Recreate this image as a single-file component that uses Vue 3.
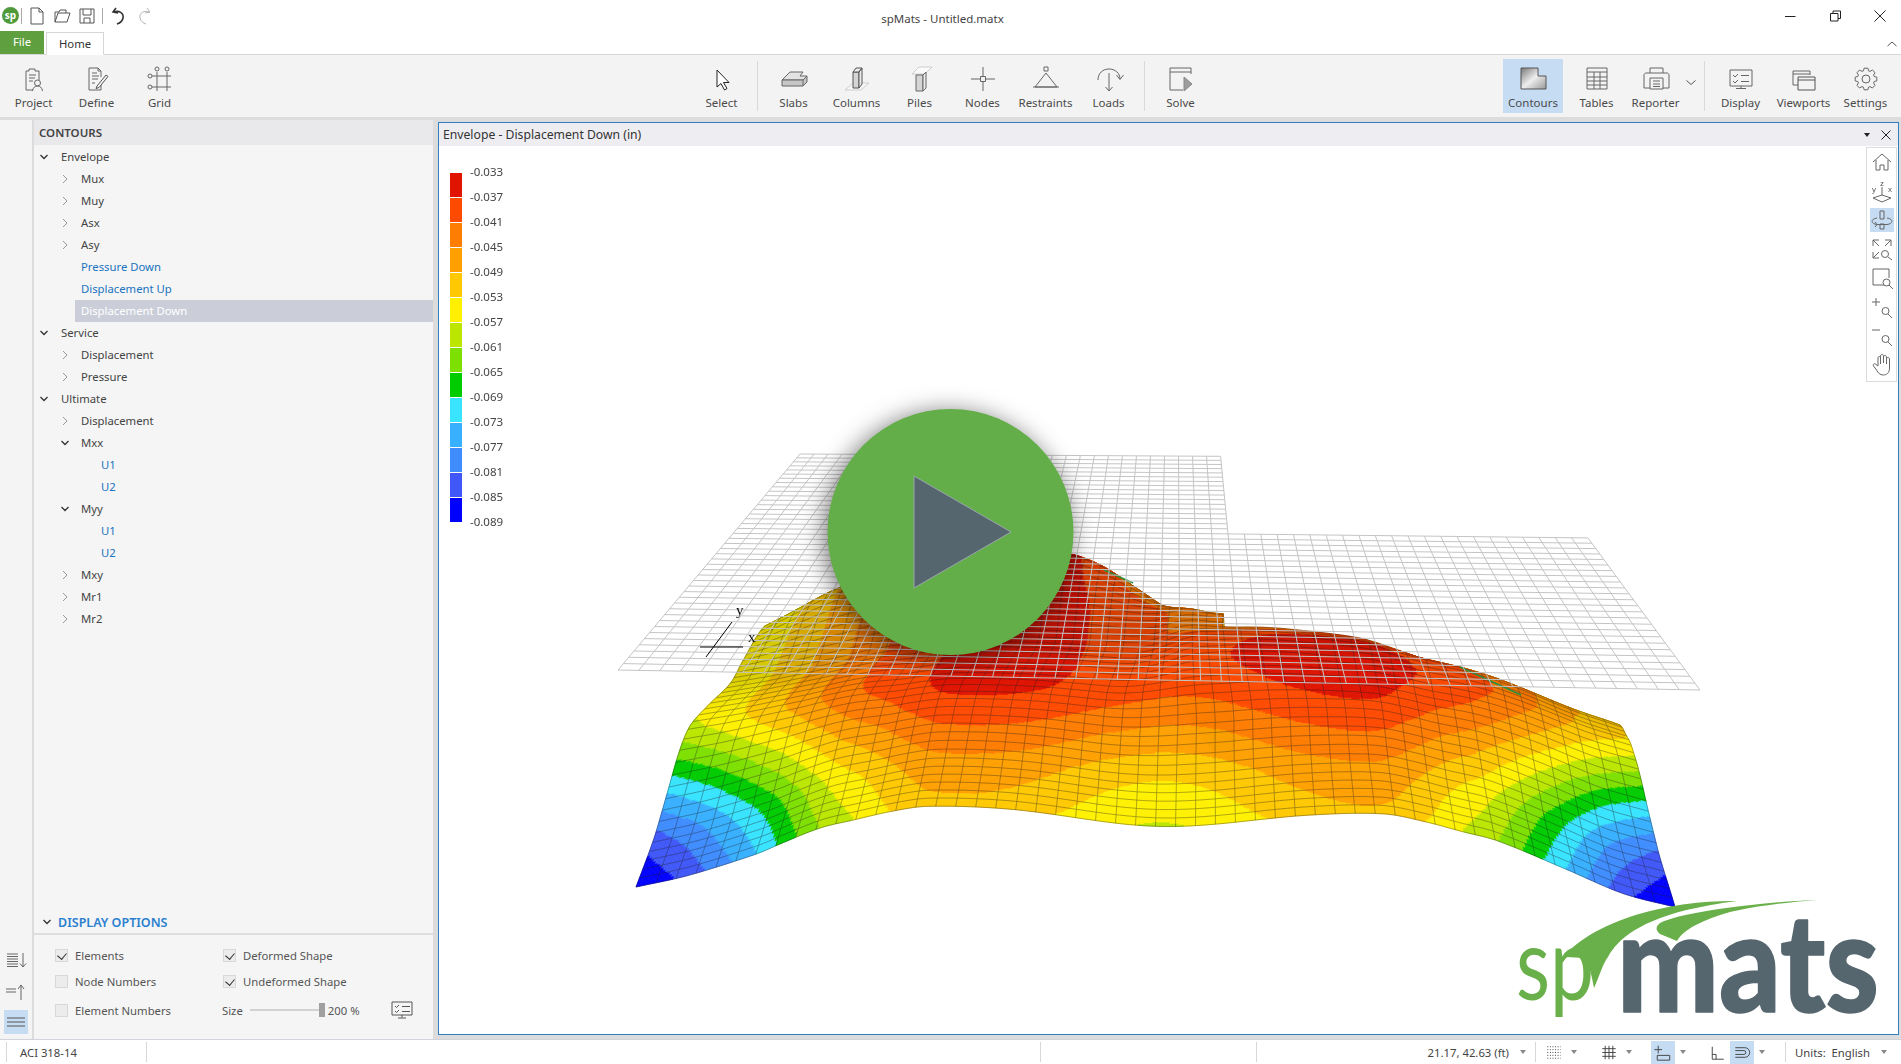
<template>
  <div class="app">
    <header class="titlebar">
      <div class="qat">
        <span class="splogo">sp</span>
        <i class="qsep"></i>
        <svg v-for="q in qatFile" :key="q.name" class="qico" viewBox="0 0 20 20">
          <path v-for="(d, i) in q.paths" :key="i" :d="d" :class="q.cls" />
        </svg>
        <i class="qsep two"></i>
        <svg v-for="q in qatEdit" :key="q.name" class="qico" viewBox="0 0 20 20">
          <path v-for="(d, i) in q.paths" :key="i" :d="d" :class="q.cls" />
        </svg>
      </div>
      <div class="doc-title">spMats - Untitled.matx</div>
      <div class="winctl">
        <svg viewBox="0 0 14 14" class="wbtn"><path d="M2 7.5h10.5" /></svg>
        <svg viewBox="0 0 14 14" class="wbtn"><path d="M2.5 4.5h7.5v7.5h-7.5z M5 4.5v-2.5h7.5v7.5h-2.5" /></svg>
        <svg viewBox="0 0 14 14" class="wbtn"><path d="M1.5 1.5l11 11 M12.5 1.5l-11 11" /></svg>
      </div>
    </header>

    <nav class="tabs">
      <div class="tab-file">File</div>
      <div class="tab-home">Home</div>
      <svg class="collapse" viewBox="0 0 12 8"><path d="M1.5 6l4.5-4 4.5 4" /></svg>
    </nav>

    <section class="ribbon">
      <div class="rgroup first">
        <RibbonBtn v-for="b in groupA" :key="b.label" :btn="b" />
      </div>
      <div class="rgroup mid">
        <RibbonBtn :btn="groupB[0]" />
        <i class="rsep"></i>
        <RibbonBtn v-for="b in groupB.slice(1, 7)" :key="b.label" :btn="b" />
        <i class="rsep"></i>
        <RibbonBtn :btn="groupB[7]" />
      </div>
      <div class="rgroup right">
        <RibbonBtn :btn="groupC[0]" class="active narrow" />
        <RibbonBtn :btn="groupC[1]" class="tables" />
        <RibbonBtn :btn="groupC[2]" class="reporter" />
        <svg class="rep-arrow" viewBox="0 0 12 8"><path d="M1.5 1.5l4.5 4 4.5-4" /></svg>
        <i class="rsep"></i>
        <RibbonBtn v-for="b in groupC.slice(3)" :key="b.label" :btn="b" class="tail" />
      </div>
    </section>

    <main class="workspace">
      <aside class="rail">
        <svg class="railico" viewBox="0 0 24 24"><path d="M3 6h11 M3 8.5h11 M3 11h11 M3 13.5h11 M3 16h11 M3 18.5h11 M19 5v14 M16 15.5l3 3.5 3-3.5" /></svg>
        <svg class="railico" viewBox="0 0 24 24"><path d="M2 10h10 M2 13h10 M17 21V6 M14 10l3-4 3 4" /></svg>
        <svg class="railico on" viewBox="0 0 24 24"><path d="M3 8h18 M3 12h18 M3 16h18" /></svg>
      </aside>

      <aside class="panel">
        <div class="panel-head">CONTOURS</div>
        <ul class="tree">
          <li v-for="(n, i) in tree" :key="i" class="row" :class="['lv' + n.lv, { leaf: n.leaf, sel: n.sel }]">
            <svg v-if="n.open !== undefined" class="caret" :class="{ open: n.open }" viewBox="0 0 10 10">
              <path :d="n.open ? 'M1.5 3l3.5 3.5 3.5-3.5' : 'M3 1l4 4-4 4'" />
            </svg>
            <span class="row-text">{{ n.t }}</span>
          </li>
        </ul>
        <div class="opt-head">
          <svg class="opt-caret" viewBox="0 0 10 10"><path d="M1.5 3l3.5 3.5 3.5-3.5" /></svg>
          <span>DISPLAY OPTIONS</span>
        </div>
        <div class="opt-body">
          <label class="opt"><i class="cb on"></i>Elements</label>
          <label class="opt"><i class="cb on"></i>Deformed Shape</label>
          <label class="opt"><i class="cb"></i>Node Numbers</label>
          <label class="opt"><i class="cb on"></i>Undeformed Shape</label>
          <label class="opt"><i class="cb"></i>Element Numbers</label>
          <div class="opt size">
            <span>Size</span>
            <span class="slider"><i class="thumb"></i></span>
            <span>200 %</span>
            <svg class="size-ico" viewBox="0 0 24 20">
              <path d="M2 2h20v13H2z M5 6l1.500 1.500 2.500-2.500 M5 11l1.500 1.500 2.500-2.500 M12 6.500h8 M12 11.500h8 M12 15v2.500 M8 18h8" />
            </svg>
          </div>
        </div>
      </aside>

      <section class="viewport">
        <div class="vp-head">
          <span>Envelope - Displacement Down (in)</span>
          <span class="vp-ctl">
            <i class="tri"></i>
            <svg viewBox="0 0 12 12"><path d="M1.500 1.500l9 9 M10.500 1.500l-9 9" /></svg>
          </span>
        </div>
        <div class="vp-body">
          <canvas ref="cv" class="plot" width="1459" height="888"></canvas>

          <div class="legend">
            <div class="swatches">
              <i v-for="c in legendColors" :key="c" :style="{ background: c }"></i>
            </div>
            <div class="ticks">
              <span v-for="l in legendLabels" :key="l">{{ l }}</span>
            </div>
          </div>

          <svg class="overlay" viewBox="439 146 1459 888">
            <path d="M700 647H743 M732 622L706 657" stroke="#000" fill="none" />
            <text x="736" y="615" class="axis">y</text>
            <text x="748" y="642" class="axis">x</text>

            <circle class="play" cx="950.500" cy="532" r="123" />
            <path d="M914 476L1011 532L914 588Z" fill="#56666f" stroke="#9aa7ad" stroke-width="1" />

            <path d="M1737 901C1680 900 1610 915 1572 948L1566 957L1584 958C1590 965 1592 978 1594 988C1600 975 1602 965 1608 957C1620 935 1650 912 1737 901Z" fill="#6ab04a" />
            <path d="M1818 900C1760 902 1680 912 1660 923C1655 927 1656 931 1660 934L1677 941C1682 932 1695 922 1730 912C1755 906 1790 902 1818 900Z" fill="#6ab04a" />
            <text x="1516" y="1000" class="logo-sp" textLength="78" lengthAdjust="spacingAndGlyphs">sp</text>
            <text x="1617" y="1012" class="logo-mats" textLength="262" lengthAdjust="spacingAndGlyphs">mats</text>
          </svg>

          <div class="navbar">
            <div v-for="(n, i) in navIcons" :key="i" class="nav-item" :class="{ on: i === 2 }">
              <svg viewBox="0 0 24 24">
                <path v-for="(d, k) in n" :key="k" :d="d" />
                <template v-if="i === 1">
                  <text x="10" y="7" class="nav-letter">z</text>
                  <text x="2" y="13" class="nav-letter">y</text>
                  <text x="18" y="13" class="nav-letter">x</text>
                </template>
              </svg>
            </div>
          </div>
        </div>
      </section>
    </main>

    <footer class="status">
      <div class="st st-a">ACI 318-14</div>
      <div class="st st-b"></div>
      <div class="st st-c"></div>
      <div class="st st-d">21.17, 42.63 (ft)<i class="tri grey"></i></div>
      <div class="st st-e">
        <svg class="sico" viewBox="0 0 24 24"><path d="M5 6h14 M5 9h14 M5 12h14 M5 15h14 M5 18h14" stroke-dasharray="1 1.700" /></svg>
        <i class="tri grey"></i>
        <svg class="sico" viewBox="0 0 24 24"><path d="M5 8h14 M5 12h14 M5 16h14 M8 5v14 M12 5v14 M16 5v14" /></svg>
        <i class="tri grey"></i>
        <svg class="sico on" viewBox="0 0 24 24"><path d="M7 5v8 M3 9h8 M6 15h13v5H6z" /></svg>
        <i class="tri grey"></i>
        <svg class="sico" viewBox="0 0 24 24"><path d="M6 6v13h12 M6 14h4v5" /></svg>
        <svg class="sico on tight" viewBox="0 0 24 24"><path d="M5 7h10a5 5 0 0 1 0 10H5 M5 10h9a2 2 0 0 1 0 4H5" /></svg>
        <i class="tri grey"></i>
      </div>
      <div class="st st-f">Units:&nbsp;&nbsp;English<i class="tri grey"></i></div>
    </footer>
  </div>
</template>

<script setup>
import { ref, onMounted, h as el } from 'vue';

// ribbon button, small enough to stay in this file
const RibbonBtn = {
  props: ['btn'],
  setup(props) {
    return () => el('div', { class: 'rbtn' }, [
      el('svg', { viewBox: '0 0 32 32', class: 'rico' }, [
        props.btn.grad ? el('defs', [
          el('linearGradient', { id: 'cg', x1: 0, y1: 0, x2: 1, y2: 1 }, [
            el('stop', { offset: '0', 'stop-color': '#777' }),
            el('stop', { offset: '.5', 'stop-color': '#eee' }),
            el('stop', { offset: '1', 'stop-color': '#999' }),
          ]),
        ]) : null,
        ...props.btn.p.map((x, i) => el('path', {
          key: i,
          d: x.d || x,
          fill: x.f || 'none',
          stroke: x.s || '#666',
          'stroke-width': 1,
        })),
      ]),
      el('span', { class: 'rlabel' }, props.btn.label),
    ]);
  },
};

const gearPath = () => {
  const cx = 16, cy = 16, teeth = 8;
  let d = '';
  for (let i = 0; i < teeth; i++) {
    const a = (i / teeth) * Math.PI * 2;
    const pts = [[8.6, -0.3], [11, -0.17], [11, 0.17], [8.6, 0.3]];
    pts.forEach(([r, o]) => {
      const x = cx + r * Math.cos(a + o), y = cy + r * Math.sin(a + o);
      d += (d ? 'L' : 'M') + x.toFixed(1) + ' ' + y.toFixed(1);
    });
  }
  return d + 'Z M20 16a4 4 0 1 1-8 0a4 4 0 1 1 8 0';
};

const groupA = [
  { label: 'Project', p: ['M8 8h3V6h6v2h4v9 M8 8v19h7 M11 12h7 M11 15h6 M11 18h4 M22.500 20a3 3 0 1 1-6 0a3 3 0 1 1 6 0 M14.500 28c.5-3.500 2.500-5 5-5s4.500 1.500 5 5'] },
  { label: 'Define', p: ['M8 5h9l3 3v6 M17 5v3h3 M8 5v22h12v-6 M11 10h5 M11 13h7 M11 16h6 M11 20h3', { d: 'M16 23l9-11 2 1.500-9 11-3 1z', s: '#555', f: '#f3f3f3' }] },
  { label: 'Grid', p: ['M13 9v19 M23 9v19 M8 13h19 M8 24h19 M15 6a2 2 0 1 1-4 0a2 2 0 1 1 4 0 M25 6a2 2 0 1 1-4 0a2 2 0 1 1 4 0 M8 13a2 2 0 1 1-4 0a2 2 0 1 1 4 0 M8 24a2 2 0 1 1-4 0a2 2 0 1 1 4 0'] },
];
const groupB = [
  { label: 'Select', p: [{ d: 'M11 7v17l4-3.500 3.500 6.500 2.500-1.500-3.500-6h5.500z', f: '#fff', s: '#222' }] },
  { label: 'Slabs', p: [{ d: 'M4 17l8-8h13l-3 4h7l-4 4z', f: '#e2e2e2' }, { d: 'M4 17v6h21l4-4v-6l-4 4z M25 17v6', f: '#c6c6c6' }] },
  { label: 'Columns', p: [{ d: 'M4 27l8-7h16l-8 7z', f: '#f6f6f6', s: '#cfcfcf' }, { d: 'M12 9h6v16h-6z', f: '#d5d5d5', s: '#555' }, { d: 'M12 9l3-4h6l-3 4z M18 9l3-4v16l-3 4z', f: '#ececec', s: '#555' }] },
  { label: 'Piles', p: [{ d: 'M8 11l7-7h13l-7 7z', f: '#fafafa', s: '#ccc' }, { d: 'M12 12h7v16h-7z', f: '#d5d5d5', s: '#666' }, { d: 'M19 12l3-3v16l-3 3z', f: '#ececec', s: '#666' }] },
  { label: 'Nodes', p: ['M16 4v9 M16 19v9 M4 16h9 M19 16h9', { d: 'M13.500 13.500h5v5h-5z', s: '#666' }] },
  { label: 'Restraints', p: ['M16 10l11 14H5z M3 24h26', 'M14 4h4v4h-4z'] },
  { label: 'Loads', p: ['M16 10v18 M12.500 24l3.500 4 3.500-4 M5 17c0-7 5-11 11-11 6 0 11 4 11 10 M23.500 12l3.500 4.500 3.500-4.500'] },
  { label: 'Solve', p: ['M5 5h21v6 M5 5v22h13 M5 9h21', { d: 'M19 14l8 7-8 7z', f: '#9c9c9c', s: '#888' }] },
];
const groupC = [
  { label: 'Contours', grad: true, p: [{ d: 'M4 5h17v8h8v13H4z', f: 'url(#cg)', s: '#555' }] },
  { label: 'Tables', p: ['M6 5h20v21H6z M6 9h20 M6 14h20 M6 18h20 M6 22h20 M13 9v17 M19 9v17'] },
  { label: 'Reporter', p: ['M10 10V5h13v5 M10 25H4V12c0-1 1-2 2-2h21c1 0 2 1 2 2v13h-6', { d: 'M10 15h13v11H10z', f: '#f3f3f3' }, 'M13 18h7 M13 21h7 M13 23.500h7'] },
  { label: 'Display', p: ['M5 7h22v16H5z M8 12l2 2 3-3 M8 18l2 2 3-3 M16 12.500h8 M16 18.500h8 M16 23v2 M11 25.500h10'] },
  { label: 'Viewports', p: ['M5 8h17v4 M5 8v14h5 M5 11h17', { d: 'M10 14h17v13H10z M10 17h17', f: '#f3f3f3', s: '#555' }] },
  { label: 'Settings', p: [gearPath()] },
];

const qatFile = [
  { name: 'new', cls: 'q', paths: ['M4 2h8l4 4v12H4z M12 2v4h4'] },
  { name: 'open', cls: 'q', paths: ['M3 16V6h4l1-2h6v3 M3 16l3-9h12l-3 9z'] },
  { name: 'save', cls: 'q', paths: ['M3 3h14v14H3z M6 3v6h8V3 M7 17v-5h6v5'] },
];
const qatEdit = [
  { name: 'undo', cls: 'q dark', paths: ['M7 2L4 6l5 1 M4.500 6C10 4 15 7 14 12c-.5 3-3 5-6 6'] },
  { name: 'redo', cls: 'q light', paths: ['M13 2l3 4-5 1 M15.500 6C10 4 5 7 6 12c.5 3 3 5 6 6'] },
];

const tree = [
  { t: 'Envelope', lv: 0, open: true },
  { t: 'Mux', lv: 1, open: false },
  { t: 'Muy', lv: 1, open: false },
  { t: 'Asx', lv: 1, open: false },
  { t: 'Asy', lv: 1, open: false },
  { t: 'Pressure Down', lv: 1, leaf: true },
  { t: 'Displacement Up', lv: 1, leaf: true },
  { t: 'Displacement Down', lv: 1, leaf: true, sel: true },
  { t: 'Service', lv: 0, open: true },
  { t: 'Displacement', lv: 1, open: false },
  { t: 'Pressure', lv: 1, open: false },
  { t: 'Ultimate', lv: 0, open: true },
  { t: 'Displacement', lv: 1, open: false },
  { t: 'Mxx', lv: 1, open: true },
  { t: 'U1', lv: 2, leaf: true },
  { t: 'U2', lv: 2, leaf: true },
  { t: 'Myy', lv: 1, open: true },
  { t: 'U1', lv: 2, leaf: true },
  { t: 'U2', lv: 2, leaf: true },
  { t: 'Mxy', lv: 1, open: false },
  { t: 'Mr1', lv: 1, open: false },
  { t: 'Mr2', lv: 1, open: false },
];

const navIcons = [
  ['M3 12L12 4l9 8 M6 10v10h4v-5h4v5h4V10'],
  ['M12 8v8 M12 16L3 19 M12 16l9 3 M3 19l9 4 9-4'],
  ['M10 3h4v8h-4z M10 16h4v5h-4z M7 10c-7 1-6 6 0 6.500h10c6-.5 7-5.500 0-6.500 M5 19l2-2.500-2-2.500'],
  ['M3 9V3h6 M3 3l6 6 M21 9V3h-6 M21 3l-6 6 M3 15v6h6 M3 21l6-6 M18.500 17a3.500 3.500 0 1 1-7 0a3.500 3.500 0 1 1 7 0 M18 20l4 3'],
  ['M14 19H3V3h16v9 M20 16.500a3.500 3.500 0 1 1-7 0a3.500 3.500 0 1 1 7 0 M19 19l4 4'],
  ['M6 3v8 M2 7h8 M19 16a3.500 3.500 0 1 1-7 0a3.500 3.500 0 1 1 7 0 M18 19l4 4'],
  ['M2 6h8 M19 15a3.500 3.500 0 1 1-7 0a3.500 3.500 0 1 1 7 0 M18 18l4 4'],
  ['M8 13V5c0-2 2.500-2 2.500 0v6 M10.500 10V3c0-2 3-2 3 0v7 M13.500 10V4c0-2 3-2 3 0v7 M16.500 11V6c0-2 3-2 3 0v9c0 5-3 7-6 7-4 0-5-2-7-5l-3-4c-1-2 1-3 2.500-1.500L8 13'],
];

// top of the scale first, as in the legend
const legendColors = ['#e01400', '#ff4b00', '#ff7d00', '#ffa000', '#ffc800', '#fff000', '#bce600', '#7ee000', '#00cc00', '#38e4ff', '#38b0ff', '#3f8cff', '#4058f8', '#0000ff'];
const legendLabels = Array.from({ length: 15 }, (_, i) => '-' + (0.033 + i * 0.004).toFixed(3));

// --- mesh of the deformed slab ---
const curve = (pts) => {
  const n = pts.length;
  const m = pts.map((p, i) => {
    if (i === 0) return (pts[1][1] - p[1]) / (pts[1][0] - p[0]);
    if (i === n - 1) return (p[1] - pts[i - 1][1]) / (p[0] - pts[i - 1][0]);
    return (pts[i + 1][1] - pts[i - 1][1]) / (pts[i + 1][0] - pts[i - 1][0]);
  });
  return (x) => {
    if (x <= pts[0][0]) return pts[0][1];
    if (x >= pts[n - 1][0]) return pts[n - 1][1];
    let i = 0;
    while (x > pts[i + 1][0]) i++;
    const w = pts[i + 1][0] - pts[i][0], t = (x - pts[i][0]) / w;
    const t2 = t * t, t3 = t2 * t;
    return (2 * t3 - 3 * t2 + 1) * pts[i][1] + (t3 - 2 * t2 + t) * w * m[i]
      + (-2 * t3 + 3 * t2) * pts[i + 1][1] + (t3 - t2) * w * m[i + 1];
  };
};
const sm = (a, b, x) => {
  const t = Math.min(1, Math.max(0, (x - a) / (b - a)));
  return t * t * (3 - 2 * t);
};

const A = curve([[0, 0], [0.05, 0.1], [0.117, 0.286], [0.136, 0.357], [0.177, 0.5], [0.21, 0.571], [0.245, 0.643], [0.28, 0.69], [0.36, 0.68], [0.505, 0.565], [0.65, 0.68], [0.72, 0.7], [0.76, 0.643], [0.795, 0.571], [0.83, 0.5], [0.895, 0.286], [0.95, 0.1], [1, 0]]);
const BR = curve([[0, 0], [0.155, 0.115], [0.23, 0.22], [0.3, 0.34], [0.365, 0.47], [0.42, 0.56], [0.5, 0.64], [0.58, 0.56], [0.65, 0.3]]);
const BL = curve([[0, 0], [0.155, 0.115], [0.23, 0.22], [0.3, 0.34], [0.365, 0.47], [0.42, 0.55], [0.5, 0.58], [0.6, 0.58], [0.75, 0.58], [0.9, 0.58], [1, 0.55]]);
const XL = curve([[0, 0], [0.3, 35], [0.42, 53], [0.5, 71], [0.6, 93], [0.7, 107], [0.85, 134], [1, 184]]);
const EX = curve([[0, 0], [0.45, 0], [0.55, -25], [0.7, -10], [0.85, 12], [0.92, 28], [1, 46]]);
const GX = curve([[0, -10], [0.1, -35], [0.36, -42], [0.45, -25], [0.5, -10], [0.5745, 5], [1, 5]]);

const plateY = (u, v) => (670 - 216 * v) * (1 - u) + (690 - 232 * v) * u;
const platePt = (u, v) => {
  const xl = 618 + 182 * v, xr = 1700 - 171 * v;
  return [xl + (xr - xl) * u, plateY(u, v)];
};
const heightAt = (u, v) => {
  const a = A(u);
  const bR = BR(v) + 0.2 * sm(0.75, 1, u) * sm(0.5, 0.65, v);
  const w = 1 - sm(0.45, 0.6, u);
  const b = bR + (BL(v) - bR) * w;
  const k = 1.15 + 5 * Math.max(0, a - 0.6);
  let h = 1 - (1 - a) * (1 - b) * Math.max(0.02, 1 - k * a * b);
  h *= 1 - 0.6 * sm(0.35, 0.5745, u) * sm(0.7, 1, v);
  return h;
};
const surfPt = (u, v) => {
  const xl = 636 + XL(v), xr = 1675 - 94 * v;
  const h = heightAt(u, v);
  const r = Math.min(v / 0.65, 1);
  const back = 90 * sm(0.82, 1, v) + 60 * sm(0.4, 0.5745, u) * sm(0.72, 1, v);
  const s = 92 + 125 * (1 - h) + EX(u) * r * r + GX(u) * sm(0.62, 0.85, v) + back;
  const pull = 20 * sm(0.45, 0.57, u) * (1 - sm(0.57, 0.9, u)) * sm(0.3, 0.65, v);
  return [xl + (xr - xl) * u - pull, plateY(u, v) + s];
};

const COLS = 52, ROWS = 42, NOTCH_COL = 30, NOTCH_ROW = 25;
const vOf = (j) => { const t = j / ROWS; return t + 0.25 * t * (1 - t); };
const colsIn = (j) => (j >= NOTCH_ROW ? NOTCH_COL : COLS);

const bandColor = (h, v) => {
  const idx = Math.min(13, Math.max(0, Math.floor(h * 14)));
  const c = legendColors[13 - idx];
  const k = 1 - 0.16 * sm(0.42, 0.68, v);
  const n = parseInt(c.slice(1), 16);
  return `rgb(${((n >> 16) & 255) * k | 0},${((n >> 8) & 255) * k | 0},${(n & 255) * k | 0})`;
};

const drawSurface = (ctx) => {
  const SUB = 7;
  for (let j = ROWS - 1; j >= 0; j--) {
    const v0 = vOf(j), v1 = vOf(j + 1), nc = colsIn(j);
    for (let i = 0; i < nc; i++) {
      for (let a = SUB - 1; a >= 0; a--) {
        for (let b = 0; b < SUB; b++) {
          const ua = (i + b / SUB) / COLS, ub = (i + (b + 1) / SUB) / COLS;
          const va = v0 + (v1 - v0) * a / SUB, vb = v0 + (v1 - v0) * (a + 1) / SUB;
          const c = bandColor(heightAt((ua + ub) / 2, (va + vb) / 2), va);
          const p = [surfPt(ua, va), surfPt(ub, va), surfPt(ub, vb), surfPt(ua, vb)];
          ctx.fillStyle = c;
          ctx.strokeStyle = c;
          ctx.lineWidth = 0.7;
          ctx.beginPath();
          ctx.moveTo(p[0][0], p[0][1]);
          for (let q = 1; q < 4; q++) ctx.lineTo(p[q][0], p[q][1]);
          ctx.closePath();
          ctx.fill();
          ctx.stroke();
        }
      }
    }
    // mesh lines of this row
    ctx.strokeStyle = 'rgba(30,30,30,.5)';
    ctx.lineWidth = 0.7;
    ctx.beginPath();
    for (let s = 0; s <= nc * 2; s++) {
      const p = surfPt(s / 2 / COLS, v1);
      if (s === 0) ctx.moveTo(p[0], p[1]); else ctx.lineTo(p[0], p[1]);
    }
    for (let i = 0; i <= nc; i++) {
      for (let s = 0; s <= 3; s++) {
        const p = surfPt(i / COLS, v0 + (v1 - v0) * s / 3);
        if (s === 0) ctx.moveTo(p[0], p[1]); else ctx.lineTo(p[0], p[1]);
      }
    }
    ctx.stroke();
  }
  ctx.beginPath();
  for (let s = 0; s <= COLS * 2; s++) {
    const p = surfPt(s / 2 / COLS, 0);
    if (s === 0) ctx.moveTo(p[0], p[1]); else ctx.lineTo(p[0], p[1]);
  }
  ctx.stroke();
  // thin far side of the surface showing along the crest
  ctx.strokeStyle = '#2f8f3c';
  ctx.lineWidth = 1.6;
  ctx.beginPath();
  ctx.moveTo(1104, 570); ctx.lineTo(1133, 583);
  ctx.moveTo(1460, 667); ctx.lineTo(1521, 695);
  ctx.stroke();
};

const drawPlate = (ctx) => {
  ctx.strokeStyle = '#c4c4c4';
  ctx.lineWidth = 1;
  ctx.beginPath();
  for (let j = 0; j <= ROWS; j++) {
    const cols = j > NOTCH_ROW ? NOTCH_COL : COLS;
    const a = platePt(0, vOf(j)), b = platePt(cols / COLS, vOf(j));
    ctx.moveTo(a[0], a[1]);
    ctx.lineTo(b[0], b[1]);
  }
  for (let i = 0; i <= COLS; i++) {
    const top = i > NOTCH_COL ? NOTCH_ROW : ROWS;
    const a = platePt(i / COLS, 0), b = platePt(i / COLS, vOf(top));
    ctx.moveTo(a[0], a[1]);
    ctx.lineTo(b[0], b[1]);
  }
  ctx.stroke();
};

const cv = ref(null);
onMounted(() => {
  const ctx = cv.value.getContext('2d');
  ctx.translate(-439, -146);
  drawSurface(ctx);
  drawPlate(ctx);
});
</script>

<style>
html, body { margin: 0; padding: 0; background: #fff; overflow: hidden; }
.rbtn { width: 63px; height: 54px; padding-top: 4px; box-sizing: border-box; display: flex; flex-direction: column; align-items: center; flex: none; }
.rico { width: 32px; height: 32px; display: block; flex: none; }
.rlabel { font-size: 11.5px; line-height: 16px; color: #4a4a4a; white-space: nowrap; }
</style>

<style scoped>
.app {
  width: 1901px;
  height: 1064px;
  display: flex;
  flex-direction: column;
  overflow: hidden;
  font-family: "Noto Sans", "Open Sans", "Liberation Sans", sans-serif;
  font-size: 11.3px;
  color: #444;
  background: #fff;
}

.titlebar {
  height: 31px;
  flex: none;
  display: grid;
  grid-template-columns: 1fr auto 1fr;
  align-items: center;
}
.qat { display: flex; align-items: center; padding-left: 2px; }
.splogo {
  width: 17px;
  height: 17px;
  border-radius: 50%;
  background: #4f9a3a;
  color: #fff;
  font-size: 10px;
  font-weight: 700;
  line-height: 16px;
  text-align: center;
  flex: none;
}
.qsep { width: 1px; height: 16px; background: #aaa; margin: 0 5px 0 2px; flex: none; }
.qsep.two { margin: 0 6px 0 0; }
.qico { width: 20px; height: 20px; margin-right: 5px; flex: none; }
.q { fill: none; stroke: #555; stroke-width: 1; }
.q.light { stroke: #b5b5b5; }
.q.dark { stroke: #333; stroke-width: 1.6; }
.doc-title { font-size: 11.5px; color: #444; margin-right: 16px; padding-top: 5px; }
.winctl { display: flex; justify-content: flex-end; align-items: center; gap: 31px; padding-right: 14px; }
.wbtn { width: 14px; height: 14px; fill: none; stroke: #222; stroke-width: 1; }

.tabs {
  height: 24px;
  flex: none;
  display: flex;
  align-items: flex-end;
  border-bottom: 1px solid #d6d6d6;
  box-sizing: border-box;
  position: relative;
}
.tab-file {
  width: 44px;
  height: 23px;
  background: #5f9f3f;
  color: #fff;
  text-align: center;
  line-height: 22px;
}
.tab-home {
  width: 58px;
  height: 23px;
  margin-left: 2px;
  margin-bottom: -1px;
  box-sizing: border-box;
  background: #fff;
  border: 1px solid #d6d6d6;
  border-bottom: 1px solid #fff;
  color: #333;
  text-align: center;
  line-height: 22px;
}
.collapse { margin-left: auto; margin-right: 3px; margin-bottom: 6px; width: 12px; height: 8px; fill: none; stroke: #555; }

.ribbon {
  height: 62px;
  flex: none;
  background: #f3f3f3;
  display: flex;
  padding-top: 4px;
  box-sizing: border-box;
}
.rgroup { display: flex; align-items: flex-start; }
.rgroup.first { padding-left: 2px; }
.rgroup.mid { margin-left: 499px; }
.rgroup.right { margin-left: 291px; }
.rsep { width: 1px; height: 50px; margin: 2px 4px 0; background: #d9d9d9; flex: none; }
.active { background: #c5dcf3; }
.narrow { width: 60px; }
.tables { margin-left: 2px; }
.reporter { width: 55px; }
.rep-arrow { width: 12px; height: 8px; margin: 20px 3px 0 2px; fill: none; stroke: #555; flex: none; }
.tail:last-child { width: 61px; }

.workspace {
  flex: 1;
  min-height: 0;
  background: #dcdcdc;
  padding-top: 3px;
  display: flex;
}
.rail {
  width: 32px;
  flex: none;
  background: #f4f4f4;
  margin-right: 2px;
  display: flex;
  flex-direction: column;
  justify-content: flex-end;
  align-items: center;
  gap: 7px;
  padding-bottom: 5px;
  box-sizing: border-box;
}
.railico { width: 24px; height: 24px; fill: none; stroke: #666; stroke-width: 1; flex: none; }
.railico.on { background: #c5dcf3; stroke: #555; }

.panel {
  width: 399px;
  flex: none;
  background: #f5f5f5;
  margin-right: 5px;
  display: flex;
  flex-direction: column;
}
.panel-head {
  height: 25px;
  flex: none;
  background: #e9e9ec;
  padding-left: 5px;
  font-weight: 600;
  font-size: 11.5px;
  line-height: 25px;
  color: #444;
}
.tree { list-style: none; margin: 0; padding: 1px 0 0; flex: 1; }
.row { height: 22px; line-height: 22px; position: relative; color: #444; white-space: nowrap; }
.row.lv0 { padding-left: 27px; }
.row.lv1 { padding-left: 47px; }
.row.lv2 { padding-left: 67px; }
.row.leaf { color: #2073c0; }
.row.sel { margin-left: 41px; padding-left: 6px; background: #cbced9; color: #fff; }
.caret { position: absolute; top: 6px; width: 10px; height: 10px; fill: none; stroke: #9a9a9a; stroke-width: 1; }
.caret.open { stroke: #333; stroke-width: 1.300; }
.lv0 .caret { left: 5px; }
.lv1 .caret { left: 26px; }

.opt-head {
  height: 22px;
  flex: none;
  display: flex;
  align-items: center;
  gap: 6px;
  padding-left: 8px;
  border-bottom: 2px solid #dedede;
  color: #2a7fd0;
  font-size: 12.500px;
  font-weight: 600;
}
.opt-caret { width: 10px; height: 10px; fill: none; stroke: #333; stroke-width: 1.300; }
.opt-body {
  height: 104px;
  flex: none;
  box-sizing: border-box;
  padding: 7px 0 0 21px;
  display: grid;
  grid-template-columns: 168px 1fr;
  grid-template-rows: 26px 26px 32px;
  align-items: center;
}
.opt { display: flex; align-items: center; gap: 7px; color: #555; }
.cb {
  width: 13px;
  height: 13px;
  box-sizing: border-box;
  background: #ececec;
  border: 1px solid #d8d8d8;
  position: relative;
  flex: none;
}
.cb.on::after {
  content: "";
  position: absolute;
  left: 2.500px;
  top: 1px;
  width: 5px;
  height: 7px;
  transform: rotate(40deg) scaleX(1);
  border-right: 1.500px solid #333;
  border-bottom: 1.500px solid #333;
}
.size { margin-left: -1px; gap: 5px; }
.slider { width: 70px; height: 2px; background: #d2d2d2; position: relative; margin: 0 3px 0 2px; }
.thumb { position: absolute; right: -5px; top: -6px; width: 6px; height: 14px; background: #a0a0a0; }
.size-ico { width: 24px; height: 20px; margin-left: 25px; fill: none; stroke: #555; stroke-width: 1; }

.viewport {
  width: 1461px;
  flex: none;
  box-sizing: border-box;
  margin: 2px 2px 4px 0;
  border: 1px solid #2f7fc1;
  background: #fff;
  display: flex;
  flex-direction: column;
}
.vp-head {
  height: 23px;
  flex: none;
  background: #eeeef2;
  padding-left: 4px;
  font-size: 12.200px;
  line-height: 22px;
  color: #333;
  display: flex;
  justify-content: space-between;
  align-items: center;
}
.vp-ctl { display: flex; align-items: center; gap: 10px; padding-right: 6px; }
.vp-ctl svg { width: 12px; height: 12px; fill: none; stroke: #222; stroke-width: 1; }
.tri { display: inline-block; width: 0; height: 0; border-left: 3px solid transparent; border-right: 3px solid transparent; border-top: 4px solid #222; }
.tri.grey { border-top-color: #888; }
.vp-body { flex: 1; position: relative; overflow: hidden; }
.plot { position: absolute; left: 0; top: 0; }
.legend { position: absolute; left: 11px; top: 13px; display: flex; gap: 8px; }
.swatches { display: flex; flex-direction: column; padding-top: 14px; }
.swatches i { width: 12px; height: 24px; margin-bottom: 1px; display: block; }
.ticks { display: flex; flex-direction: column; }
.ticks span { height: 25px; line-height: 25px; font-size: 11.500px; color: #444; }
.overlay { position: absolute; left: 0; top: 0; width: 1459px; height: 888px; }
.axis { font-family: "Liberation Serif", serif; font-size: 15px; fill: #111; }
.play { fill: #63ae48; filter: drop-shadow(-3px 3px 12px rgba(0, 0, 0, .55)); }
.logo-sp { font-family: Lato, "Open Sans", sans-serif; font-weight: 400; font-size: 100px; fill: #6ab04a; }
.logo-mats { font-family: Lato, "Open Sans", sans-serif; font-weight: 900; font-size: 138px; fill: #56666f; stroke: #56666f; stroke-width: 1.500px; stroke-linejoin: round; }

.navbar {
  position: absolute;
  right: 1px;
  top: 1px;
  width: 31px;
  box-sizing: border-box;
  background: #fff;
  border: 1px solid #dcdcdc;
  padding: 2px 0 4px;
  display: flex;
  flex-direction: column;
  align-items: center;
  gap: 5px;
}
.nav-item { width: 24px; height: 24px; }
.nav-item.on { background: #c5dcf3; }
.nav-item svg { width: 24px; height: 24px; display: block; fill: none; stroke: #666; stroke-width: 1; }
.nav-letter { font-size: 8px; fill: #555; stroke: none; font-family: "Liberation Sans", sans-serif; }

.status {
  height: 25px;
  flex: none;
  box-sizing: border-box;
  border-top: 1px solid #d2d2da;
  padding-left: 6px;
  display: flex;
  background: #fff;
  color: #444;
}
.st { border-left: 1px solid #d8d8d8; box-sizing: border-box; margin: 2px 0; display: flex; align-items: center; flex: none; }
.st-a { width: 140px; padding-left: 13px; }
.st-b { width: 894px; }
.st-c { width: 216px; }
.st-d { width: 279px; justify-content: flex-end; padding-right: 9px; gap: 11px; }
.st-e { width: 250px; padding-left: 6px; }
.st-f { width: 116px; padding-left: 9px; gap: 11px; }
.sico { width: 24px; height: 23px; fill: none; stroke: #444; stroke-width: 1; margin-left: 19.500px; flex: none; }
.sico:first-child { margin-left: 0; }
.sico.tight { margin-left: 0; }
.sico.on { background: #c5dcf3; }
.st-e .tri { margin-left: 5px; margin-right: 0; }
</style>
